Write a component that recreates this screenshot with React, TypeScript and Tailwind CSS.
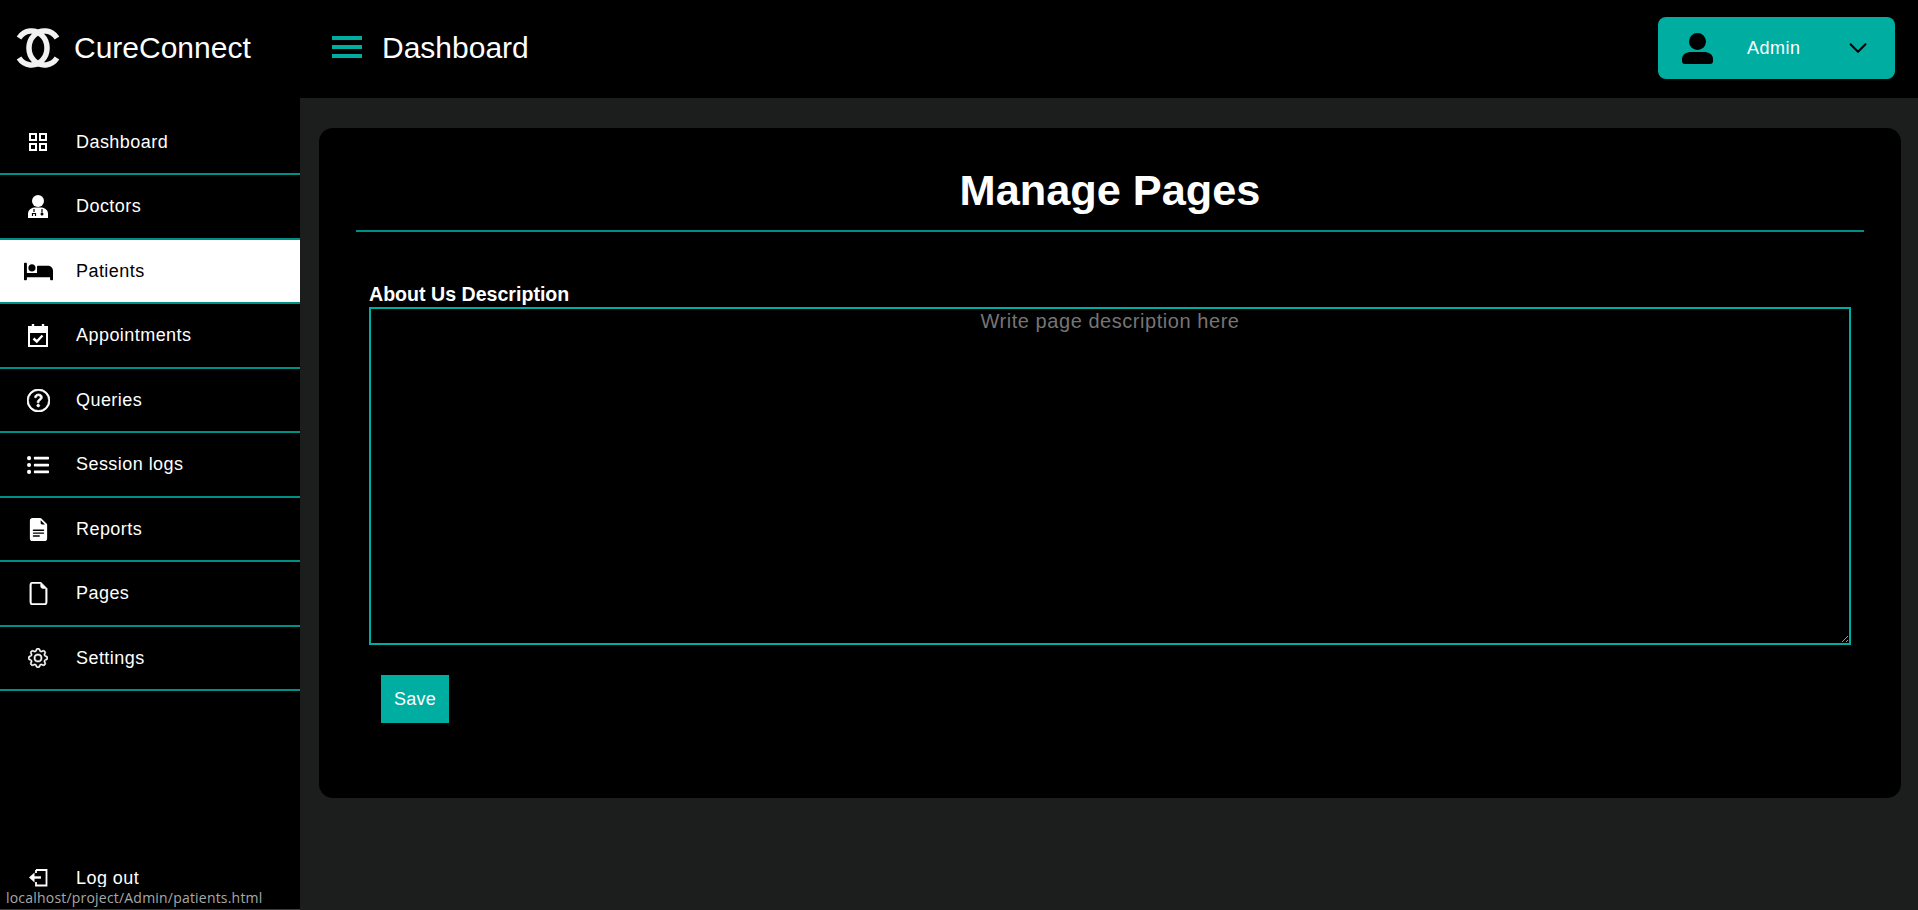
import { useState } from "react";
import { BsQuestionCircle, BsFileEarmarkTextFill, BsFileEarmark, BsGear } from "react-icons/bs";
import { FaBed, FaListUl } from "react-icons/fa";
import { FiChevronDown } from "react-icons/fi";

function GridIcon() {
  return (
    <svg width="18" height="18" viewBox="0 0 18 18" fill="none" stroke="currentColor" strokeWidth="2">
      <rect x="1" y="1" width="6" height="6" />
      <rect x="11" y="1" width="6" height="6" />
      <rect x="1" y="11" width="6" height="6" />
      <rect x="11" y="11" width="6" height="6" />
    </svg>
  );
}

function DoctorIcon() {
  return (
    <svg width="20" height="23" viewBox="0 0 20 23">
      <circle cx="10" cy="6" r="6" fill="currentColor" />
      <path d="M0 23 V19 C0 15 3 13 6 12.5 H14 C17 13 20 15 20 19 V23 Z" fill="currentColor" />
      <path d="M6 14 V17 M4.5 21 V18.5 H7.5 V21 M14 14 V17.5" fill="none" stroke="#000" strokeWidth="1.2" />
      <circle cx="14" cy="19" r="1.5" fill="#000" />
    </svg>
  );
}

function CalendarCheckIcon() {
  return (
    <svg width="20" height="23" viewBox="0 0 20 23" fill="none" stroke="currentColor">
      <path d="M5 0 V4 M15 0 V4" strokeWidth="2.4" />
      <path d="M1 3 H19 V8 H1 Z" fill="currentColor" strokeWidth="2" />
      <path d="M1 5 V22 H19 V5" strokeWidth="2" />
      <path d="M5.5 14.5 L8.8 17.5 L14.5 11.5" strokeWidth="2.4" />
    </svg>
  );
}

function LogoutIcon() {
  return (
    <svg width="19" height="18" viewBox="0 0 19 18" fill="none" stroke="currentColor" strokeWidth="2">
      <path d="M7 1 H17.5 V16.5 H7 V13 M7 1 V4" strokeWidth="1.8" />
      <path d="M12 8.5 H3" strokeWidth="2.4" />
      <path d="M0 8.5 L5.5 3.5 V13.5 Z" fill="currentColor" stroke="none" />
    </svg>
  );
}

function UserIcon() {
  return (
    <svg width="31" height="31" viewBox="0 0 31 31" fill="#000">
      <circle cx="15.5" cy="8.5" r="8.5" />
      <path d="M0 26 C0 21.5 4.5 19 9 19 H22 C26.5 19 31 21.5 31 26 V28 Q31 31 28 31 H3 Q0 31 0 28 Z" />
    </svg>
  );
}

function Logo() {
  return (
    <svg width="44" height="40" viewBox="0 0 44 40" fill="none" stroke="#f2f2f2" strokeWidth="5.5">
      <path d="M3 10 A15.5 17 0 1 1 3 30" />
      <path d="M41 10 A15.5 17 0 1 0 41 30" />
    </svg>
  );
}

const navItems = [
  { label: "Dashboard", icon: <GridIcon /> },
  { label: "Doctors", icon: <DoctorIcon /> },
  { label: "Patients", icon: <FaBed size={29} />, active: true },
  { label: "Appointments", icon: <CalendarCheckIcon /> },
  { label: "Queries", icon: <BsQuestionCircle size={23} stroke="currentColor" strokeWidth={0.5} /> },
  { label: "Session logs", icon: <FaListUl size={22} /> },
  { label: "Reports", icon: <BsFileEarmarkTextFill size={23} /> },
  { label: "Pages", icon: <BsFileEarmark size={23} stroke="currentColor" strokeWidth={0.4} /> },
  { label: "Settings", icon: <BsGear size={20} stroke="currentColor" strokeWidth={0.4} /> },
];

export default function App() {
  const [description, setDescription] = useState("");

  return (
    <div className="flex h-[910px] w-full flex-col overflow-hidden bg-[#1c1e1d] font-['Liberation_Sans',Arial,sans-serif] text-white">
      <header className="flex h-[98px] shrink-0 items-center bg-black pb-[2px] pr-[23px]">
        <div className="flex w-[300px] shrink-0 items-center pl-[16px]">
          <Logo />
          <span className="ml-[14px] text-[30px] leading-none">CureConnect</span>
        </div>
        <div className="mb-[2px] ml-[32px] flex flex-col gap-[5px]">
          <span className="h-[4px] w-[30px] bg-[#00ada1]" />
          <span className="h-[4px] w-[30px] bg-[#00ada1]" />
          <span className="h-[4px] w-[30px] bg-[#00ada1]" />
        </div>
        <h1 className="ml-[20px] text-[30px] leading-none font-normal">Dashboard</h1>
        <button className="ml-auto flex h-[62px] w-[237px] items-center rounded-[8px] bg-[#00ada1] pl-[24px] pr-[22px] text-[18px] tracking-[0.5px]">
          <UserIcon />
          <span className="ml-[34px]">Admin</span>
          <FiChevronDown className="ml-auto text-black" size={30} strokeWidth={1.6} />
        </button>
      </header>

      <div className="flex min-h-0 flex-1">
        <aside className="relative flex w-[300px] shrink-0 flex-col border-b border-[#3a3a3a] bg-black pt-[12.5px]">
          <nav>
            {navItems.map((item) => (
              <a
                key={item.label}
                href="#"
                className={`flex h-[64.5px] items-center border-b-2 border-[#008f86] pt-[1px] text-[18px] tracking-[0.45px] ${item.active ? "bg-white text-black" : "text-white"}`}
              >
                <span className="flex w-[76px] shrink-0 justify-center">{item.icon}</span>
                {item.label}
              </a>
            ))}
          </nav>
          <a href="#" className="absolute bottom-[11px] left-0 flex h-[40px] items-center text-[18px] tracking-[0.45px]">
            <span className="flex w-[76px] shrink-0 justify-center">
              <LogoutIcon />
            </span>
            Log out
          </a>
          <span className="absolute bottom-0 left-0 h-[22px] bg-black pl-[6px] pr-[4px] font-['Open_Sans',sans-serif] text-[14px] leading-[22px] tracking-[0.2px] text-[#a8a8a8]">
            localhost/project/Admin/patients.html
          </span>
        </aside>

        <main className="min-w-0 flex-1 pl-[19px] pr-[17px] pt-[30px]">
          <section className="h-[670px] rounded-[14px] bg-black px-[37px] pt-[37px]">
            <h2 className="h-[67px] border-b-2 border-[#008f86] text-center text-[43.3px] leading-[50px] font-bold">
              Manage Pages
            </h2>
            <form className="px-[13px] pt-[49px]">
              <label htmlFor="about" className="block text-[19.6px] leading-[26px] font-bold">
                About Us Description
              </label>
              <textarea
                id="about"
                value={description}
                onChange={(e) => setDescription(e.target.value)}
                placeholder="Write page description here"
                className="block h-[338px] w-full border-2 border-[#00ada1] bg-black px-[2px] text-center text-[20px] leading-[24px] tracking-[0.55px] outline-none placeholder:text-[#757575]"
              />
              <button type="button" className="ml-[12px] mt-[30px] h-[48px] w-[68px] bg-[#00ada1] text-[18px] tracking-[0.3px]">
                Save
              </button>
            </form>
          </section>
        </main>
      </div>
    </div>
  );
}
